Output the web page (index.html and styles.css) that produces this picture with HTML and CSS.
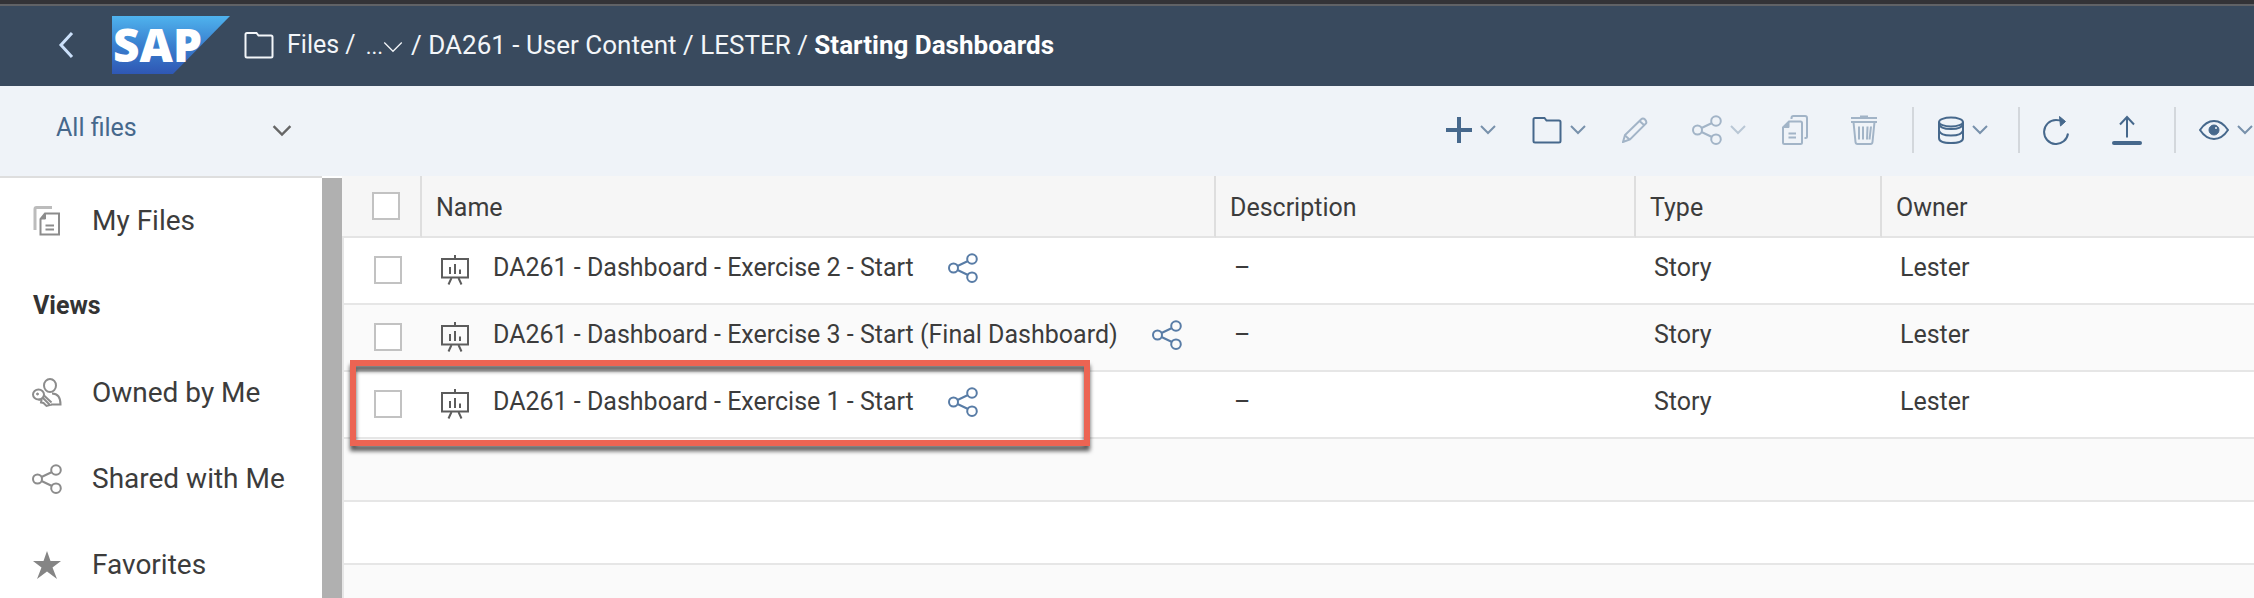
FILE: index.html
```html
<!DOCTYPE html>
<html lang="en">
<head>
<meta charset="utf-8">
<title>Files - Starting Dashboards</title>
<link rel="stylesheet" href="styles.css">
</head>
<body>
<svg class="defs" aria-hidden="true">
  <symbol id="chevron" viewBox="0 0 16 10"><path d="M1 1l7 7 7-7"/></symbol>
  <symbol id="folder" viewBox="0 0 30 28"><path d="M1.500 25V3.500Q1.500 2 3 2H12.500L14.500 4.500H27Q28.500 4.500 28.500 6V25Q28.500 26.500 27 26.500H3Q1.500 26.500 1.500 25Z"/></symbol>
  <symbol id="share" viewBox="0 0 30 30"><circle cx="5.500" cy="15" r="4.500"/><circle cx="24" cy="6" r="4.800"/><circle cx="24" cy="24.200" r="4.800"/><path d="M9.500 13l10.500-5M9.500 17l10.500 5"/></symbol>
  <symbol id="story" viewBox="0 0 30 30"><path d="M15 0v4M11.500 23L8.500 29.500M18.500 23l3 6.500"/><path d="M2 4h26v18.500H2z"/><path d="M10 12v7M15 9v10M20 14.500v4.500"/></symbol>
</svg>
<div class="app">
  <header class="shell">
    <button class="back" aria-label="Back"><svg width="16" height="28" viewBox="0 0 16 28"><path d="M14 2L3 14l11 12"/></svg></button>
    <svg class="logo" width="118" height="58" viewBox="0 0 118 58" role="img" aria-label="SAP">
      <defs><linearGradient id="sky" x1="0" y1="0" x2="0" y2="1"><stop offset="0" stop-color="#4fb3ee"/><stop offset=".5" stop-color="#3a80cf"/><stop offset="1" stop-color="#2f57b4"/></linearGradient></defs>
      <path d="M0 0h118L61 58H0z" fill="url(#sky)"/>
      <text class="logo-text" x="1" y="46">SAP</text>
    </svg>
    <nav class="crumbs" aria-label="Breadcrumb">
      <svg class="crumb-folder" width="30" height="28"><use href="#folder"/></svg>
      <span class="crumb-root"><a href="#">Files</a> /</span>
      <button class="more" aria-label="More folders">...<svg width="20" height="13"><use href="#chevron"/></svg></button>
      <span>/ <a href="#">DA261 - User Content</a> / <a href="#">LESTER</a> / <strong>Starting Dashboards</strong></span>
    </nav>
  </header>
  <div class="toolbar">
    <button class="filter"><span>All files</span><svg width="20" height="12"><use href="#chevron"/></svg></button>
    <div class="tools">
      <button class="tool plus" aria-label="Add"><svg width="26" height="26" viewBox="0 0 26 26"><path d="M13 0v26M0 13h26"/></svg><svg class="chev" width="16" height="10"><use href="#chevron"/></svg></button>
      <button class="tool folder" aria-label="Folder"><svg width="30" height="28"><use href="#folder"/></svg><svg class="chev" width="16" height="10"><use href="#chevron"/></svg></button>
      <button class="tool edit" disabled aria-label="Edit"><svg width="26" height="26" viewBox="0 0 26 26"><path d="M1 25l2-7L19 2.500Q21 .5 23 2.500T24 6.500L8 22.500z"/><path d="M3 18.500l4.500 4M17.500 4l5 4.500"/></svg></button>
      <button class="tool share" disabled aria-label="Share"><svg width="30" height="30"><use href="#share"/></svg><svg class="chev" width="16" height="10"><use href="#chevron"/></svg></button>
      <button class="tool copy" disabled aria-label="Copy"><svg width="26" height="30" viewBox="0 0 26 30"><path d="M7 6.500H18.500Q20 6.500 20 8V27.500Q20 29 18.500 29H2.500Q1 29 1 27.500V12.500z"/><path d="M9.500 4V3Q9.500 1 11.500 1H23Q25 1 25 3V21.500Q25 23 23.500 23H22.500M6.500 18.500h7.500M6.500 22.500h7.500"/><path class="solid" d="M1 12.500L7 6.500v6z"/></svg></button>
      <button class="tool trash" disabled aria-label="Delete"><svg width="26" height="30" viewBox="0 0 26 30"><path d="M0 3h26M0 7h26M9 1.500h8M2.500 7l2 20q.2 2 2 2h13q1.800 0 2-2l2-20M8 11.500v13M12 11.500v13M16.500 11.500l-.5 13M20 11.500l-1.500 13"/></svg></button>
      <span class="sep"></span>
      <button class="tool data" aria-label="Data"><svg width="26" height="28" viewBox="0 0 26 28"><ellipse cx="13" cy="6" rx="12" ry="4.500"/><path d="M1 6v16q0 5 12 5t12-5V6M1 8q1 5 12 5t12-5M1 14.500q1 5 12 5t12-5"/></svg><svg class="chev" width="16" height="10"><use href="#chevron"/></svg></button>
      <span class="sep"></span>
      <button class="tool refresh" aria-label="Refresh"><svg width="28" height="30" viewBox="0 0 28 30"><path d="M21 6.500Q18 5 14 5A12 12 0 1 0 26 18.500"/><path class="solid" d="M17.500 1.500l6 5-5 4.500z"/></svg></button>
      <button class="tool upload" aria-label="Upload"><svg width="30" height="30" viewBox="0 0 30 30"><path d="M15 22.500V2M8 9.500L15 2l7 7.500"/><path class="base" d="M2 28h26"/></svg></button>
      <span class="sep"></span>
      <button class="tool view" aria-label="View"><svg width="30" height="22" viewBox="0 0 30 22"><path d="M1 11Q7 2 15 2t14 9Q23 20 15 20T1 11z"/><circle class="solid" cx="15" cy="11" r="5"/><circle class="glint" cx="17" cy="9" r="1"/></svg><svg class="chev" width="16" height="10"><use href="#chevron"/></svg></button>
    </div>
  </div>
  <div class="body">
    <nav class="side" aria-label="File views">
      <a class="item" href="#"><svg width="30" height="30" viewBox="0 0 30 30"><path class="pale" d="M3 24V3Q3 1.500 4.500 1.500H20"/><path d="M13 7.500H27V28.500H8.500V13z"/><path class="solid" d="M8.500 13L13.500 7.500V13z"/><path d="M13.500 19.500h8.500M13.500 23.500h8.500"/></svg>My Files</a>
      <h2 class="group">Views</h2>
      <a class="item" href="#"><svg width="30" height="30" viewBox="0 0 30 30"><ellipse cx="18" cy="7.500" rx="6" ry="6.500"/><path d="M20 15.500q8.500 0 8.500 11H19"/><ellipse cx="6.500" cy="16.500" rx="5.500" ry="5"/><path d="M10.500 19.500L18 27l-3.500 1-3-3-2.500-.5.500-2.500-3-.5M11.500 17l8 7.500"/><circle class="solid" cx="5.500" cy="16" r="1"/></svg>Owned by Me</a>
      <a class="item" href="#"><svg width="30" height="30"><use href="#share"/></svg>Shared with Me</a>
      <a class="item" href="#"><svg width="30" height="30" viewBox="0 0 30 30"><path class="fill" d="M15 1l3.500 10H29l-8.500 6.500L25 29l-10-7.500L5 29l4.500-11.500L1 11h10.500z"/></svg>Favorites</a>
    </nav>
    <div class="divider"></div>
    <main class="files">
      <table>
        <colgroup><col class="c-check"><col class="c-name"><col class="c-desc"><col class="c-type"><col></colgroup>
        <thead><tr><th class="check"><input type="checkbox" aria-label="Select all"></th><th>Name</th><th>Description</th><th>Type</th><th>Owner</th></tr></thead>
        <tbody>
          <tr><td class="check"><input type="checkbox" aria-label="Select Exercise 2"></td><td><div class="name"><svg class="story" width="30" height="30"><use href="#story"/></svg><span>DA261 - Dashboard - Exercise 2 - Start</span><svg class="shared" width="30" height="30"><use href="#share"/></svg></div></td><td>–</td><td>Story</td><td>Lester</td></tr>
          <tr><td class="check"><input type="checkbox" aria-label="Select Exercise 3"></td><td><div class="name"><svg class="story" width="30" height="30"><use href="#story"/></svg><span>DA261 - Dashboard - Exercise 3 - Start (Final Dashboard)</span><svg class="shared" width="30" height="30"><use href="#share"/></svg></div></td><td>–</td><td>Story</td><td>Lester</td></tr>
          <tr class="marked"><td class="check"><input type="checkbox" aria-label="Select Exercise 1"><span class="marker"></span></td><td><div class="name"><svg class="story" width="30" height="30"><use href="#story"/></svg><span>DA261 - Dashboard - Exercise 1 - Start</span><svg class="shared" width="30" height="30"><use href="#share"/></svg></div></td><td>–</td><td>Story</td><td>Lester</td></tr>
          <tr class="empty"><td colspan="5"></td></tr>
          <tr class="empty"><td colspan="5"></td></tr>
          <tr class="empty"><td colspan="5"></td></tr>
        </tbody>
      </table>
    </main>
  </div>
</div>
</body>
</html>
```
FILE: styles.css
```css
* { box-sizing: border-box; }
body { margin: 0; font: 25px/32px Roboto, "Noto Sans", sans-serif; color: #3c3c3c; background: #fff; }
button { font: inherit; color: inherit; background: none; border: 0; padding: 0; margin: 0; display: flex; align-items: center; }
a { color: inherit; text-decoration: none; }
svg { display: block; flex: none; fill: none; stroke: currentColor; stroke-width: 2px; }
.defs { position: absolute; width: 0; height: 0; }
.solid { fill: currentColor; stroke-width: 1px; }

.app { height: 100vh; display: flex; flex-direction: column; overflow: hidden; }

/* Shell bar */
.shell { height: 86px; flex: none; display: flex; align-items: center; padding-left: 58px; background: #394a5e; border-top: 4px solid #333337; box-shadow: inset 0 2px #606266; color: #fff; }
.back { color: #cbe0fa; margin-right: 38px; }
.back svg { stroke-width: 3px; }
.logo { stroke: none; margin-right: 14px; overflow: visible; }
.logo-text { font: 800 46px "Open Sans", "Noto Sans", sans-serif; fill: #fff; }
.crumbs { display: flex; align-items: center; white-space: nowrap; color: #f3f6f9; font-size: 26px; }
.crumb-folder { margin-right: 13px; }
.crumb-root { font-size: 25px; }
.more { margin: 0 8px 0 10px; padding-top: 4px; font-size: 22px; }
.more svg { stroke-width: 1px; }
.crumbs strong { color: #fff; }

/* Toolbar */
.toolbar { height: 90px; flex: none; display: flex; align-items: center; justify-content: space-between; background: #eff3f8; color: #46688c; }
.filter { width: 236px; margin-left: 56px; justify-content: space-between; }
.filter span { padding-bottom: 6px; }
.filter svg { color: #666; }
.tools { display: flex; align-items: center; padding: 0 1px 2px 0; }
.tool .chev { margin-left: 8px; opacity: .7; }
.tool:disabled { opacity: .45; }
.plus { margin-right: 36px; }
.plus svg:first-child { stroke-width: 4px; }
.folder { margin-right: 36px; }
.edit { margin-right: 44px; }
.share { margin-right: 36px; }
.copy { margin-right: 43px; }
.trash { margin-right: 35px; }
.sep { width: 2px; height: 46px; background: #d3d7dc; }
.data { margin: 0 30px 0 24px; }
.refresh { margin: 0 42px 0 22px; }
.upload { margin-right: 32px; }
.upload .base { stroke-width: 4px; stroke-linecap: round; }
.view { margin-left: 23px; }
.glint { fill: #eff3f8; stroke: none; }

/* Body */
.body { flex: 1; min-height: 0; display: flex; }
.side { width: 322px; flex: none; border-top: 2px solid #dedede; }
.item { height: 86px; display: flex; align-items: center; gap: 30px; padding-left: 32px; font-size: 28px; }
.item svg { color: #8c8c8c; }
.item .fill { fill: #858585; stroke: none; }
.item .pale { stroke: #bcbcbc; stroke-width: 3px; }
.group { height: 86px; margin: 0; padding-left: 33px; font-size: 25px; line-height: 84px; font-weight: 700; color: #333; }
.divider { width: 20px; flex: none; margin-top: 2px; background: #b0b0b0; }
.files { flex: 1; min-width: 0; }

table { width: 100%; table-layout: fixed; border-collapse: separate; border-spacing: 0; }
.c-check { width: 80px; }
.c-name { width: 794px; }
.c-desc { width: 420px; }
.c-type { width: 246px; }
th { height: 62px; padding: 4px 14px 0; text-align: left; font-weight: 400; background: #f6f6f6; border-right: 2px solid #dedede; border-bottom: 2px solid #e4e4e4; }
th:last-child { border-right: 0; }
td { height: 67px; padding: 0 18px 6px; border-bottom: 2px solid #e6e6e6; }
td:first-child { border-left: 2px solid #e6e6e6; }
tbody tr:nth-child(even) { background: #fafafa; }
tbody tr:nth-child(n+6) { background: #fafafa; }
th.check, td.check { padding: 0 0 0 30px; }
td.check { padding-bottom: 2px; }
.empty td { height: 63px; }
input[type="checkbox"] { appearance: none; display: block; width: 28px; height: 28px; margin: 0; background: #fff; border: 2px solid #c2c2c2; }
.name { display: flex; align-items: center; white-space: nowrap; height: 32px; }
.story { margin: 4px 23px 0 0; color: #5c5c5c; }
.shared { margin-left: 34px; color: #587ca6; }
.marked { position: relative; }
.marker { position: absolute; top: -12px; bottom: -7px; left: 8px; width: 740px; border: 6px solid #ec6453; filter: drop-shadow(0 5px 2px rgba(0, 0, 0, .65)); pointer-events: none; }
```
